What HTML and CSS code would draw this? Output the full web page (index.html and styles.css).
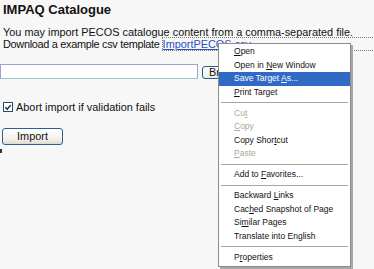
FILE: index.html
```html
<!DOCTYPE html>
<html>
<head>
<meta charset="utf-8">
<link rel="stylesheet" href="styles.css">
</head>
<body>
<div class="page">
  <h1 class="title">IMPAQ Catalogue</h1>
  <p class="intro">You may import PECOS catalogue content from a comma-separated file.<br><span class="tight">Download a example csv template</span> <a class="link" href="#">ImportPECOS.csv</a></p>
  <div class="filerow">
    <div class="filebox"></div>
    <div class="browse">Browse...</div>
  </div>
  <label class="checkrow">
    <span class="check"><svg width="9" height="9" viewBox="0 0 9 9"><path d="M1.5 4.2 L3.6 6.5 L7.6 1.8" fill="none" stroke="#21a121" stroke-width="1.6"/></svg></span>
    <span class="checklabel">Abort import if validation fails</span>
  </label>
  <div class="importbtn">Import</div>
  <div class="mark"></div>
</div>
<div class="menu">
  <div class="item"><u>O</u>pen</div>
  <div class="item">Open in <u>N</u>ew Window</div>
  <div class="item active">Save Target <u>A</u>s...</div>
  <div class="item"><u>P</u>rint Target</div>
  <div class="sep"></div>
  <div class="item dis">Cu<u>t</u></div>
  <div class="item dis"><u>C</u>opy</div>
  <div class="item">Copy Shor<u>t</u>cut</div>
  <div class="item dis"><u>P</u>aste</div>
  <div class="sep"></div>
  <div class="item">Add to <u>F</u>avorites...</div>
  <div class="sep"></div>
  <div class="item">Backward <u>L</u>inks</div>
  <div class="item">Cac<u>h</u>ed Snapshot of Page</div>
  <div class="item">Si<u>m</u>ilar Pages</div>
  <div class="item">Translate into English</div>
  <div class="sep"></div>
  <div class="item">P<u>r</u>operties</div>
</div>
</body>
</html>
```
FILE: styles.css
```css
html, body {
  margin: 0;
  padding: 0;
  background: #f7f7f7;
  width: 374px;
  height: 269px;
  overflow: hidden;
}
.page {
  font-family: "Liberation Sans", Arial, sans-serif;
  color: #111;
  padding-top: 2px;
}
.title {
  margin: 0 0 0 3px;
  font-size: 13px;
  line-height: 16px;
  font-weight: bold;
}
.intro {
  margin: 8px 0 0 3px;
  font-size: 10.9px;
  line-height: 12px;
  white-space: nowrap;
}
.tight {
  letter-spacing: -0.3px;
}
.link {
  color: #2850c8;
  text-decoration: underline;
  outline: 1px dotted #777;
  padding-right: 127px;
}
.filerow {
  display: flex;
  align-items: flex-start;
  gap: 4px;
  margin-top: 14px;
}
.filebox {
  width: 198px;
  height: 15px;
  box-sizing: border-box;
  background: #fff;
  border: 1px solid #a39fd6;
  border-bottom-color: #8ccfc6;
}
.browse {
  margin-top: 2px;
  height: 13px;
  width: 40px;
  box-sizing: border-box;
  border: 1px solid #2a5a8c;
  border-radius: 3px;
  background: linear-gradient(#ffffff, #ecebe6);
  font-size: 10.9px;
  line-height: 11px;
  padding-left: 6px;
}
.checkrow {
  display: flex;
  align-items: center;
  gap: 3px;
  margin: 22px 0 0 3px;
  font-size: 10.9px;
  line-height: 12px;
}
.check {
  width: 10px;
  height: 10px;
  box-sizing: border-box;
  border: 1px solid #1c5180;
  background: #fff;
  display: flex;
  align-items: center;
  justify-content: center;
}
.check svg path { stroke: #222; }
.importbtn {
  margin: 15px 0 0 2px;
  width: 61px;
  height: 17px;
  box-sizing: border-box;
  border: 1px solid #2d5d99;
  border-radius: 3px;
  background: linear-gradient(#ffffff, #f0efea 70%, #dcdad2);
  font-size: 10.9px;
  line-height: 15px;
  text-align: center;
}
.mark {
  margin-top: 4px;
  width: 2px;
  height: 4px;
  background: #333;
}
.menu {
  position: absolute;
  left: 218px;
  top: 43px;
  width: 133px;
  box-sizing: border-box;
  background: #fff;
  border: 1px solid #8c8c8c;
  box-shadow: 2px 2px 0 #a8a8a8;
  padding: 1px 0 2px;
  font-family: "Liberation Sans", Arial, sans-serif;
  font-size: 8.5px;
  color: #111;
}
.item {
  height: 13.5px;
  line-height: 13px;
  padding-left: 15px;
  white-space: nowrap;
}
.item.active {
  background: #316ac5;
  color: #fff;
}
.item.dis { color: #aca899; }
.sep {
  height: 7.5px;
  position: relative;
}
.sep::after {
  content: "";
  position: absolute;
  left: 2px;
  right: 2px;
  top: 3px;
  border-top: 1px solid #aca899;
}
```
